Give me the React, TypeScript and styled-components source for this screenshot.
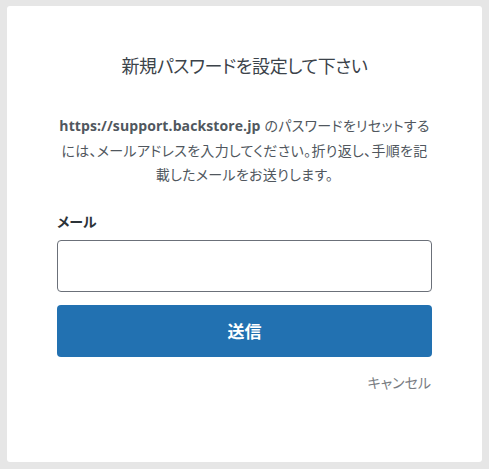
import React from "react";
import styled, { createGlobalStyle } from "styled-components";

const GlobalStyle = createGlobalStyle`
  html, body {
    margin: 0;
    padding: 0;
    background: #e6e6e6;
  }
  body {
    font-family: "Open Sans", "Noto Sans CJK JP", sans-serif;
    font-feature-settings: "palt";
  }
  * { box-sizing: border-box; }
`;

const Page = styled.div`
  width: 489px;
  height: 469px;
  padding: 6px 7px 7px 7px;
  background: #e6e6e6;
`;

const Card = styled.div`
  height: 456px;
  background: #ffffff;
  border-radius: 3px;
  padding: 47px 50px 0 50px;
  display: flex;
  flex-direction: column;
`;

const Title = styled.h1`
  margin: 0;
  font-family: "Noto Sans CJK JP", sans-serif;
  font-weight: 400;
  font-size: 18px;
  line-height: 24px;
  letter-spacing: -0.4px;
  color: #3c434a;
  text-align: center;
`;

const Description = styled.p`
  margin: 37px 0 0 0;
  font-family: "Open Sans", "Noto Sans CJK JP", sans-serif;
  font-size: 14px;
  line-height: 24.5px;
  letter-spacing: 0.3px;
  color: #50575e;
  text-align: center;
  white-space: nowrap;
`;

const Url = styled.strong`
  font-weight: 700;
  letter-spacing: 0.1px;
  color: #50575e;
`;

const Label = styled.label`
  margin-top: 23px;
  font-family: "Noto Sans CJK JP", sans-serif;
  font-weight: 700;
  font-size: 14px;
  line-height: 20px;
  color: #2c3338;
`;

const Input = styled.input`
  margin-top: 9px;
  width: 100%;
  height: 52px;
  border: 1px solid #6b7079;
  border-radius: 4px;
  background: #ffffff;
  padding: 0 12px;
  font-size: 16px;
  outline: none;
`;

const SubmitButton = styled.button`
  margin-top: 13px;
  width: 100%;
  height: 52px;
  border: none;
  border-radius: 4px;
  background: #2271b1;
  color: #ffffff;
  font-family: "Noto Sans CJK JP", sans-serif;
  font-weight: 700;
  font-size: 17px;
  cursor: pointer;
`;

const CancelRow = styled.div`
  margin-top: 15px;
  display: flex;
  justify-content: flex-end;
`;

const CancelLink = styled.a`
  font-family: "Noto Sans CJK JP", sans-serif;
  font-size: 14px;
  line-height: 20px;
  color: #787c82;
  text-decoration: none;
  margin-right: 1px;
  cursor: pointer;
`;

export default function App() {
  return (
    <>
      <GlobalStyle />
      <Page>
        <Card>
          <Title>新規パスワードを設定して下さい</Title>
          <Description>
            <Url>https://support.backstore.jp</Url> のパスワードをリセットする
            <br />
            には、メールアドレスを入力してください。折り返し、手順を記
            <br />
            載したメールをお送りします。
          </Description>
          <Label htmlFor="email">メール</Label>
          <Input id="email" type="email" />
          <SubmitButton type="button">送信</SubmitButton>
          <CancelRow>
            <CancelLink>キャンセル</CancelLink>
          </CancelRow>
        </Card>
      </Page>
    </>
  );
}
